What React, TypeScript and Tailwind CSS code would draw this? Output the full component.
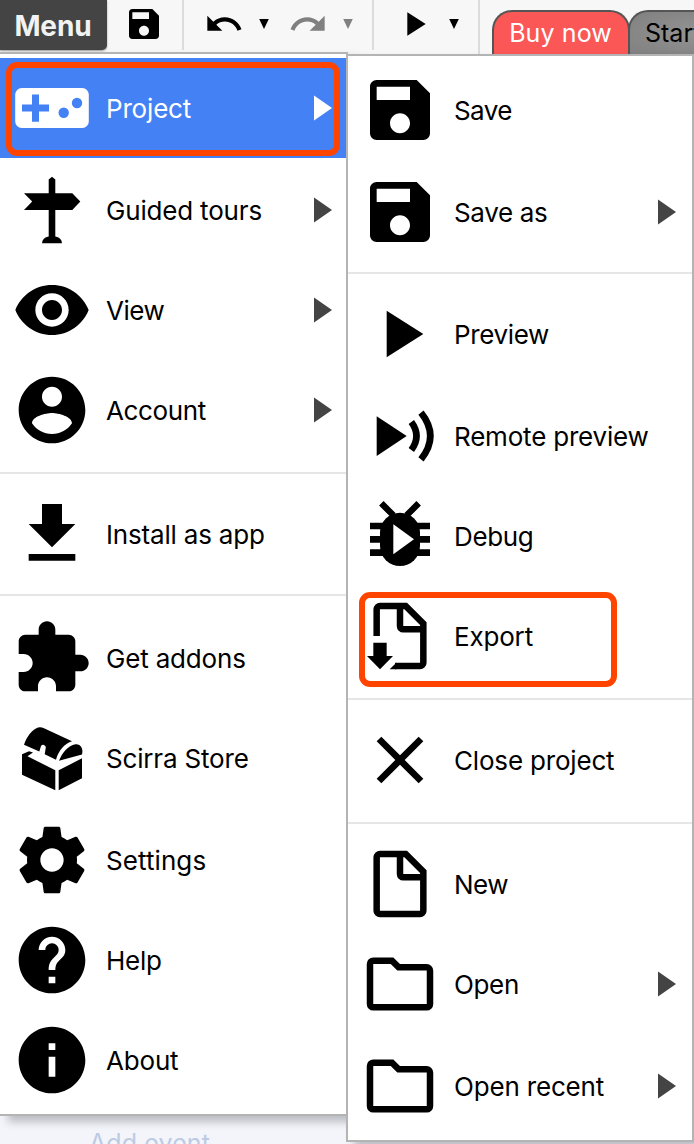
import type { ReactNode } from "react";

const CIRCLE = "M12 2C6.48 2 2 6.48 2 12s4.48 10 10 10 10-4.48 10-10S17.52 2 12 2z";

const PATHS = {
  save: "M17 3H5c-1.11 0-2 .9-2 2v14c0 1.1.89 2 2 2h14c1.1 0 2-.9 2-2V7l-4-4zm-5 16c-1.66 0-3-1.34-3-3s1.34-3 3-3 3 1.34 3 3-1.34 3-3 3zm3-10H5V5h10v4z",
  undo: "M12.5 8c-2.65 0-5.05.99-6.9 2.6L2 7v9h9l-3.62-3.62c1.39-1.16 3.16-1.88 5.12-1.88 3.54 0 6.55 2.31 7.6 5.5l2.37-.78C21.08 11.03 17.15 8 12.5 8z",
  redo: "M18.4 10.6C16.55 8.99 14.15 8 11.5 8c-4.65 0-8.58 3.03-9.96 7.22L3.9 16c1.05-3.19 4.05-5.5 7.6-5.5 1.95 0 3.73.72 5.12 1.88L13 16h9V7l-3.6 3.6z",
  play: "M8 5v14l11-7z",
  eye: "M12 4.5C7 4.5 2.73 7.61 1 12c1.73 4.39 6 7.5 11 7.5s9.27-3.11 11-7.5c-1.73-4.39-6-7.5-11-7.5zM12 17c-2.76 0-5-2.24-5-5s2.24-5 5-5 5 2.24 5 5-2.24 5-5 5zm0-8c-1.66 0-3 1.34-3 3s1.34 3 3 3 3-1.34 3-3-1.34-3-3-3z",
  account: `${CIRCLE}m0 3c1.66 0 3 1.34 3 3s-1.34 3-3 3-3-1.34-3-3 1.34-3 3-3zm0 14.2c-2.5 0-4.71-1.28-6-3.22.03-1.99 4-3.08 6-3.08 1.99 0 5.97 1.09 6 3.08-1.29 1.94-3.5 3.22-6 3.22z`,
  install: "M19 9h-4V3H9v6H5l7 7 7-7zM5 18v2h14v-2H5z",
  addon: "M20.5 11H19V7c0-1.1-.9-2-2-2h-4V3.5C13 2.12 11.88 1 10.5 1S8 2.12 8 3.5V5H4c-1.1 0-1.99.9-1.99 2v3.8H3.5c1.49 0 2.7 1.21 2.7 2.7s-1.21 2.7-2.7 2.7H2V20c0 1.1.9 2 2 2h3.8v-1.5c0-1.49 1.21-2.7 2.7-2.7 1.49 0 2.7 1.21 2.7 2.7V22H17c1.1 0 2-.9 2-2v-4h1.5c1.38 0 2.5-1.12 2.5-2.5S21.88 11 20.5 11z",
  settings: "M19.43 12.98c.04-.32.07-.64.07-.98s-.03-.66-.07-.98l2.11-1.65c.19-.15.24-.42.12-.64l-2-3.46c-.12-.22-.39-.3-.61-.22l-2.49 1c-.52-.4-1.08-.73-1.69-.98l-.38-2.65C14.46 2.18 14.25 2 14 2h-4c-.25 0-.46.18-.49.42l-.38 2.65c-.61.25-1.17.59-1.69.98l-2.49-1c-.23-.09-.49 0-.61.22l-2 3.46c-.13.22-.07.49.12.64l2.11 1.65c-.04.32-.07.65-.07.98s.03.66.07.98l-2.11 1.65c-.19.15-.24.42-.12.64l2 3.46c.12.22.39.3.61.22l2.49-1c.52.4 1.08.73 1.69.98l.38 2.65c.03.24.24.42.49.42h4c.25 0 .46-.18.49-.42l.38-2.65c.61-.25 1.17-.59 1.69-.98l2.49 1c.23.09.49 0 .61-.22l2-3.46c.12-.22.07-.49-.12-.64l-2.11-1.65zM12 15.5c-1.93 0-3.5-1.57-3.5-3.5s1.57-3.5 3.5-3.5 3.5 1.57 3.5 3.5-1.57 3.5-3.5 3.5z",
  help: `${CIRCLE}m1 17h-2v-2h2v2zm2.07-7.75l-.9.92C13.45 12.9 13 13.5 13 15h-2v-.5c0-1.1.45-2.1 1.17-2.83l1.24-1.26c.37-.36.59-.86.59-1.41 0-1.1-.9-2-2-2s-2 .9-2 2H8c0-2.21 1.79-4 4-4s4 1.79 4 4c0 .88-.36 1.68-.93 2.25z`,
  about: `${CIRCLE}m1 15h-2v-6h2v6zm0-8h-2V7h2v2z`,
  close: "M19 6.41L17.59 5 12 10.59 6.41 5 5 6.41 10.59 12 5 17.59 6.41 19 12 13.41 17.59 19 19 17.59 13.41 12z",
};

function Icon({ children, small = false }: { children: ReactNode; small?: boolean }) {
  return (
    <svg viewBox="0 0 24 24" className={small ? "size-10 shrink-0" : "size-20 shrink-0"} fill="currentColor">
      {children}
    </svg>
  );
}

const glyph = (d: string) => (
  <Icon>
    <path d={d} />
  </Icon>
);

const gamepad = (
  <svg viewBox="0 0 80 80" className="size-20 shrink-0">
    <rect x="3.2" y="20" width="73.6" height="40" rx="6.5" fill="#fff" />
    <path d="M20 26.5h7v10h10v7h-10v10.2h-7V43.500H10v-7h10z" fill="#4481f5" />
    <circle cx="51.700" cy="44.800" r="5.200" fill="#4481f5" />
    <circle cx="65" cy="35" r="5.200" fill="#4481f5" />
  </svg>
);

const signpost = (
  <svg viewBox="0 0 80 80" className="size-20 shrink-0">
    <path d="M36.700 23.300V9.500L40 6.700L43.300 9.500V23.300H60.300L68.300 31.600L60.300 40H43.300V66.600Q49.500 67.500 50 73.300H30Q30.500 67.500 36.700 66.600V40H12L20.200 31.600L12 23.300z" />
  </svg>
);

const chest = (
  <svg viewBox="0 0 80 80" className="size-20 shrink-0">
    <path d="M12 26.700C15 18 20.500 11.300 26 9.500Q29 8.800 32 10.200L60 23.300C53 25.500 46.500 32.500 44 41.700L32.700 36.300L33.800 29.500A2.600 2.600 0 0 0 29 28L27.300 33.400z" />
    <path d="M47 42.700C50 35 56 27.500 63.500 26.200C68.500 25.700 71.600 30.500 70 36.600z" />
    <path d="M10 36.300L17 33.300L21 34.500L15.500 38.200L43.300 52.300V72.300L10 56.700zM46.700 52.300L70 40.300V60.300L46.700 72.300z" />
  </svg>
);

const remote = (
  <Icon>
    <path d="M5 6.100v11.900l9-6z" />
    <path d="M15.400 7.800Q18.500 12 15.400 16.200M18.300 5Q23.900 12 18.300 19" fill="none" stroke="currentColor" strokeWidth="2" />
  </Icon>
);

const debug = (
  <Icon>
    <rect x="6" y="5" width="12" height="16" rx="6" />
    <path d="M3 8h18v2H3zM3 12h18v2H3zM3 16h18v2H3z" />
    <path d="M6.400 2.200L10 5.800M17.600 2.200L14 5.800" fill="none" stroke="currentColor" strokeWidth="1.900" />
    <path d="M10 8.500v9l6.200-4.500z" fill="#fff" />
  </Icon>
);

const newFile = (
  <Icon>
    <path
      d="M13.700 3H6a1 1 0 0 0-1 1v16a1 1 0 0 0 1 1h12a1 1 0 0 0 1-1V8.300zM12 3v6a1 1 0 0 0 1 1h6"
      fill="none"
      stroke="currentColor"
      strokeWidth="1.950"
    />
  </Icon>
);

const exportFile = (
  <Icon>
    <path
      d="M5 12V4a1 1 0 0 1 1-1h7.700L19 8.300V20a1 1 0 0 1-1 1H10.500M12 3v6a1 1 0 0 0 1 1h6"
      fill="none"
      stroke="currentColor"
      strokeWidth="1.950"
    />
    <path d="M8.900 22l2-2v2zM4 14v4H2.100L6 22l3.900-4H8v-4z" />
  </Icon>
);

const folder = (
  <Icon>
    <path
      d="M4 5h5.600l2 2H20a1 1 0 0 1 1 1v10a1 1 0 0 1-1 1H4a1 1 0 0 1-1-1V6a1 1 0 0 1 1-1z"
      fill="none"
      stroke="currentColor"
      strokeWidth="1.950"
    />
  </Icon>
);

type ItemProps = {
  icon: ReactNode;
  label: string;
  tracking?: string;
  submenu?: boolean;
  className?: string;
};

function Item({ icon, label, tracking = "tracking-[-0.18px]", submenu = false, className = "pr-[14px] text-black" }: ItemProps) {
  return (
    <div className={`flex h-[100px] items-center pl-3 ${className}`}>
      {icon}
      <span className={`ml-[14px] flex-1 pt-0.5 text-[26px] leading-8 whitespace-nowrap ${tracking}`}>{label}</span>
      {submenu && (
        <svg viewBox="0 0 18 26" className="h-[26px] w-[18px] text-[#444] in-[.active]:text-white" fill="currentColor">
          <path d="M0 .5L18 13L0 25.500z" />
        </svg>
      )}
    </div>
  );
}

function Caret({ className }: { className: string }) {
  return (
    <svg viewBox="0 0 10 10" className={`size-2.5 ${className}`} fill="currentColor">
      <path d="M.2 0h9.600L5 10z" />
    </svg>
  );
}

function Toolbar() {
  return (
    <header className="flex h-[54px] w-full items-start overflow-hidden bg-[#f7f7f7]">
      <div className="flex h-[50px] w-[107px] shrink-0 items-center justify-center rounded-br-[5px] bg-[#444] pr-px text-[28px] font-bold tracking-[-0.1px] text-[#f2f2f2] shadow-[0_1px_2px_#999]">
        <span className="pt-0.5">Menu</span>
      </div>
      <div className="flex h-[50px] w-[77px] shrink-0 border-r-2 border-[#dcdcdc] pt-1 pl-[17px]">
        <Icon small>
          <path d={PATHS.save} />
        </Icon>
      </div>
      <div className="flex h-[50px] w-[190px] shrink-0 border-r-2 border-[#dcdcdc] pt-1 pl-5">
        <Icon small>
          <path d={PATHS.undo} />
        </Icon>
        <Caret className="mt-[15px] ml-[15px]" />
        <div className="ml-[19px] flex text-[#808080]">
          <Icon small>
            <path d={PATHS.redo} />
          </Icon>
          <Caret className="mt-[15px] ml-[15px]" />
        </div>
      </div>
      <div className="flex h-[54px] w-[106px] shrink-0 border-r-2 border-[#dcdcdc] pt-1 pl-5">
        <Icon small>
          <path d={PATHS.play} />
        </Icon>
        <Caret className="mt-[15px] ml-[15px]" />
      </div>
      <div className="mt-2.5 ml-3 flex h-11 w-[138px] shrink-0 justify-center rounded-t-[20px] border-2 border-b-0 border-[#555] bg-[#fb5757] pt-[3px] pr-px text-[25px] leading-9 tracking-[0.1px] text-white">
        Buy now
      </div>
      <div className="mt-2.5 -ml-0.5 h-11 w-[180px] shrink-0 rounded-t-[20px] border-2 border-b-0 border-[#555] bg-radial from-[#969696] to-[#808080] pt-[3px] pl-[15px] text-[25px] leading-9 text-black">
        Start Page
      </div>
    </header>
  );
}

const Divider = ({ className }: { className: string }) => <hr className={`border-0 h-0.5 bg-[#e6e6e6] ${className}`} />;

function MainMenu() {
  return (
    <nav className="absolute top-[52px] left-0 h-[1064px] w-[348px] border-y-2 border-r-2 border-[#b4b4b4] bg-white pt-1 shadow-[8px_6px_8px_rgba(60,60,70,0.3)]">
      <div className="active relative bg-[#4481f5] text-white">
        <Item icon={gamepad} label="Project" submenu className="pr-[14px] text-white" />
        <div className="absolute inset-x-1.5 top-1 bottom-0.5 rounded-[11px] border-6 border-[#ff4400]" />
      </div>
      <div className="pt-0.5">
        <Item icon={signpost} label="Guided tours" submenu />
        <Item icon={glyph(PATHS.eye)} label="View" tracking="tracking-[-0.5px]" submenu />
        <Item icon={glyph(PATHS.account)} label="Account" tracking="tracking-[-0.35px]" submenu />
      </div>
      <Divider className="mt-3 mb-2.5" />
      <Item icon={glyph(PATHS.install)} label="Install as app" />
      <Divider className="mt-2.5 mb-3" />
      <Item icon={glyph(PATHS.addon)} label="Get addons" />
      <Item icon={chest} label="Scirra Store" />
      <div className="pt-0.5">
        <Item icon={glyph(PATHS.settings)} label="Settings" tracking="tracking-[0.08px]" />
        <Item icon={glyph(PATHS.help)} label="Help" tracking="tracking-[-0.3px]" />
        <Item icon={glyph(PATHS.about)} label="About" />
      </div>
    </nav>
  );
}

function ProjectMenu() {
  return (
    <nav className="absolute top-[54px] left-[346px] h-[1088px] w-[348px] border-2 border-[#b4b4b4] bg-white pt-1 shadow-[8px_6px_8px_rgba(60,60,70,0.3)]">
      <Item icon={glyph(PATHS.save)} label="Save" tracking="tracking-[-0.6px]" />
      <div className="pt-0.5">
        <Item icon={glyph(PATHS.save)} label="Save as" tracking="tracking-[-0.35px]" submenu className="pr-4 text-black" />
      </div>
      <Divider className="my-2.5" />
      <Item icon={glyph(PATHS.play)} label="Preview" tracking="tracking-[-0.35px]" />
      <div className="pt-0.5">
        <Item icon={remote} label="Remote preview" tracking="tracking-[-0.2px]" />
      </div>
      <Item icon={debug} label="Debug" tracking="tracking-[-0.35px]" />
      <div className="relative">
        <Item icon={exportFile} label="Export" />
        <div className="absolute top-1.5 left-[11px] h-[95px] w-[258px] rounded-[11px] border-6 border-[#ff4400]" />
      </div>
      <Divider className="mt-3 mb-2.5" />
      <Item icon={glyph(PATHS.close)} label="Close project" />
      <Divider className="mt-3 mb-2.5" />
      <Item icon={newFile} label="New" tracking="tracking-[-0.5px]" />
      <Item icon={folder} label="Open" tracking="tracking-[-0.35px]" submenu className="pr-4 text-black" />
      <div className="pt-0.5">
        <Item icon={folder} label="Open recent" submenu className="pr-4 text-black" />
      </div>
    </nav>
  );
}

export default function App() {
  return (
    <div className="relative flex h-[1144px] w-[694px] flex-col overflow-hidden bg-[#f3f5fb] font-['Inter',sans-serif]">
      <Toolbar />
      <main className="flex flex-1 items-end overflow-hidden pl-[89px]">
        <span className="-mb-[15px] text-[25px] leading-8 tracking-[0.1px] text-[#bccbe3]">Add event</span>
      </main>
      <MainMenu />
      <ProjectMenu />
    </div>
  );
}
